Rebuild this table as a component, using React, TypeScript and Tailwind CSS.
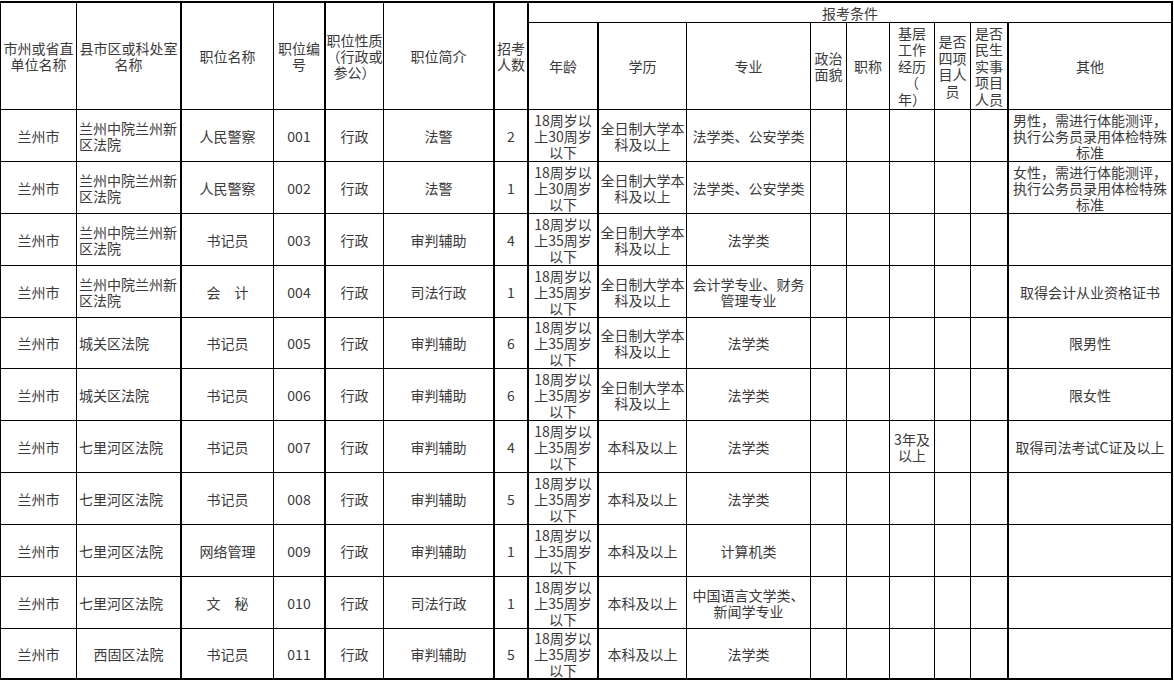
import React from "react";

const RB = [
  "border-r",
  "border-r-2",
  "border-r",
  "border-r-2",
  "border-r",
  "border-r-2",
  "border-r-2",
  "border-r-2",
  "border-r",
  "border-r",
  "border-r",
  "border-r",
  "border-r",
  "border-r",
  "border-r-2",
  "border-r-2",
];

const AGE30 = "18周岁以\n上30周岁\n以下";
const AGE35 = "18周岁以\n上35周岁\n以下";
const FULL = "全日制大学本\n科及以上";
const BK = "本科及以上";
const LZ = "兰州中院兰州新\n区法院";
const MALE = "男性，需进行体能测评，\n执行公务员录用体检特殊\n标准";
const FEMALE = "女性，需进行体能测评，\n执行公务员录用体检特殊\n标准";

const rows: string[][] = [
  ["兰州市", LZ, "人民警察", "001", "行政", "法警", "2", AGE30, FULL, "法学类、公安学类", "", "", "", "", "", MALE],
  ["兰州市", LZ, "人民警察", "002", "行政", "法警", "1", AGE30, FULL, "法学类、公安学类", "", "", "", "", "", FEMALE],
  ["兰州市", LZ, "书记员", "003", "行政", "审判辅助", "4", AGE35, FULL, "法学类", "", "", "", "", "", ""],
  ["兰州市", LZ, "会\u3000计", "004", "行政", "司法行政", "1", AGE35, FULL, "会计学专业、财务\n管理专业", "", "", "", "", "", "取得会计从业资格证书"],
  ["兰州市", "城关区法院", "书记员", "005", "行政", "审判辅助", "6", AGE35, FULL, "法学类", "", "", "", "", "", "限男性"],
  ["兰州市", "城关区法院", "书记员", "006", "行政", "审判辅助", "6", AGE35, FULL, "法学类", "", "", "", "", "", "限女性"],
  ["兰州市", "七里河区法院", "书记员", "007", "行政", "审判辅助", "4", AGE35, BK, "法学类", "", "", "3年及\n以上", "", "", "取得司法考试C证及以上"],
  ["兰州市", "七里河区法院", "书记员", "008", "行政", "审判辅助", "5", AGE35, BK, "法学类", "", "", "", "", "", ""],
  ["兰州市", "七里河区法院", "网络管理", "009", "行政", "审判辅助", "1", AGE35, BK, "计算机类", "", "", "", "", "", ""],
  ["兰州市", "七里河区法院", "文\u3000秘", "010", "行政", "司法行政", "1", AGE35, BK, "中国语言文学类、\n新闻学专业", "", "", "", "", "", ""],
  ["兰州市", "西固区法院", "书记员", "011", "行政", "审判辅助", "5", AGE35, BK, "法学类", "", "", "", "", "", ""],
];

const headTop = [
  "市州或省直\n单位名称",
  "县市区或科处室\n名称",
  "职位名称",
  "职位编\n号",
  "职位性质\n（行政或\n参公）",
  "职位简介",
  "招考\n人数",
];

const headSub = [
  "年龄",
  "学历",
  "专业",
  "政治\n面貌",
  "职称",
  "基层\n工作\n经历\n（\n年）",
  "是否\n四项\n目人\n员",
  "是否\n民生\n实事\n项目\n人员",
  "其他",
];

const cellBase =
  "flex items-center justify-center text-center whitespace-pre border-black overflow-visible";

export default function App() {
  return (
    <div className="w-[1174px] h-[680px] bg-white pt-[1px] overflow-hidden">
      <div
        className="grid w-fit border-l border-t-2 border-black text-[14px] leading-[16px] text-[#3a3a3a] grid-cols-[76px_105px_92px_52px_58px_111px_34px_70px_88px_124px_36px_43px_45px_36px_38px_164px] grid-rows-[20px_87px_52px_52px_52px_52px_51px_52px_52px_52px_52px_52px_51px]"
        style={{ fontFamily: '"Noto Sans CJK SC", "Noto Sans", sans-serif' }}
      >
        {headTop.map((t, i) => (
          <div key={"h" + i} className={`${cellBase} row-span-2 border-b ${RB[i]}`}>
            {t}
          </div>
        ))}
        <div className={`${cellBase} col-span-9 border-b border-r-2`}>报考条件</div>
        {headSub.map((t, i) => (
          <div key={"s" + i} className={`${cellBase} leading-[16.5px] border-b ${RB[i + 7]}`}>
            {t}
          </div>
        ))}
        {rows.map((r, ri) =>
          r.map((t, ci) => {
            const last = ri === rows.length - 1;
            const bb = last ? "border-b-2" : "border-b";
            const leftAlign = ci === 1 && !last;
            return (
              <div
                key={ri + "-" + ci}
                className={`${leftAlign ? "flex items-center justify-start text-left pl-[2px] whitespace-pre border-black" : cellBase} ${bb} ${RB[ci]}`}
              >
                {t}
              </div>
            );
          })
        )}
      </div>
    </div>
  );
}
